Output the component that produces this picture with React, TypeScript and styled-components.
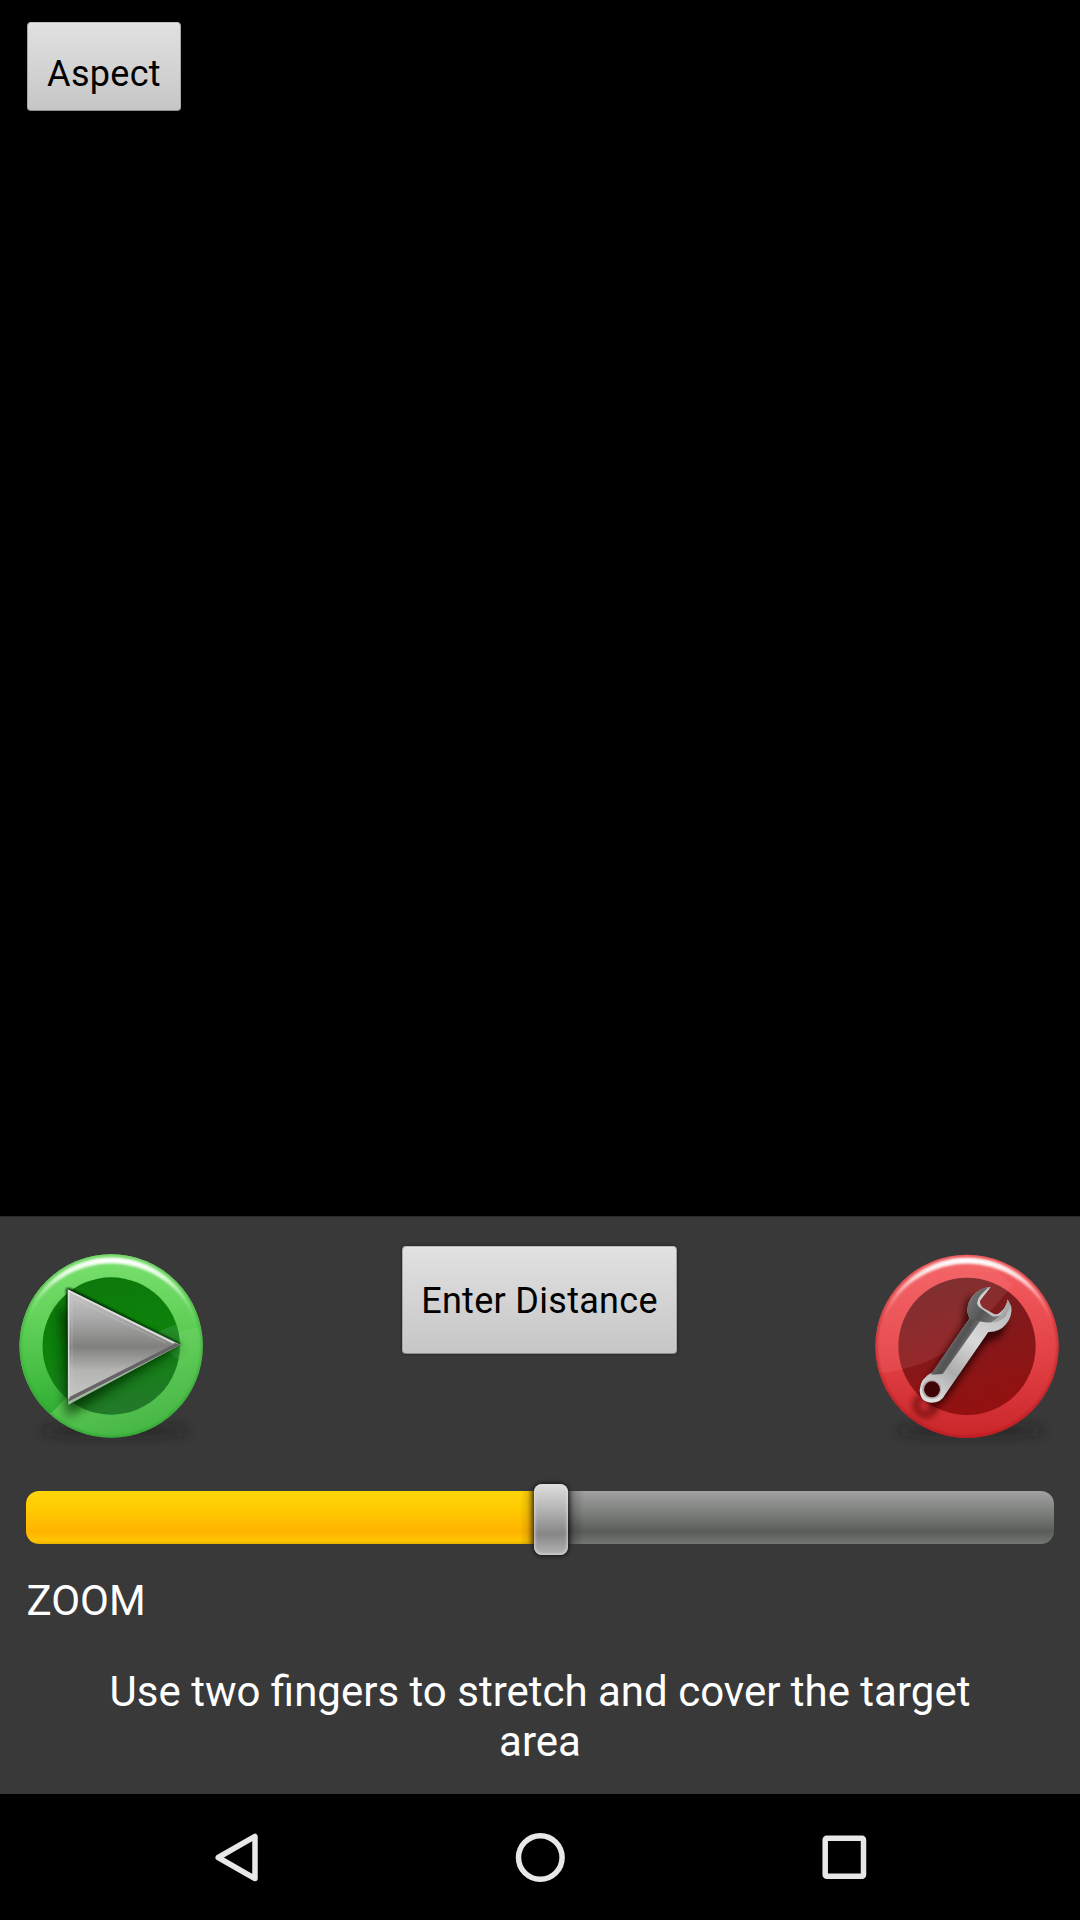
import React from "react";
import styled, { createGlobalStyle } from "styled-components";

const GlobalStyle = createGlobalStyle`
  * { box-sizing: border-box; }
  html, body { margin: 0; padding: 0; background: #000; }
  body { font-family: Roboto, "Noto Sans", sans-serif; }
`;

const Screen = styled.main`
  display: flex;
  flex-direction: column;
  width: 1080px;
  height: 1920px;
  background: #000;
  overflow: hidden;
`;

const Viewfinder = styled.section`
  height: 1216px;
  flex: none;
  padding: 22px 27px;
`;

const MetalButton = styled.button<{ $width: number; $height: number; $drop: number }>`
  display: block;
  width: ${(p) => p.$width}px;
  height: ${(p) => p.$height}px;
  padding: ${(p) => p.$drop}px 0 0;
  border: 1px solid;
  border-color: #bcbcbc #a5a5a5 #8c8c8c;
  border-radius: 4px;
  background: linear-gradient(#e1e1e1, #c6c6c6);
  box-shadow: inset 0 1px 1px #e6e6e6, 0 0 3px rgba(0, 0, 0, 0.55);
  font-family: inherit;
  font-size: 36px;
  line-height: 42px;
  letter-spacing: 0.3px;
  color: #000;
  white-space: nowrap;
`;

const Panel = styled.section`
  display: flex;
  flex-direction: column;
  height: 578px;
  flex: none;
  padding-top: 13px;
  border-top: 1px solid #2a2a2a;
  background: #393939;
`;

const Actions = styled.div`
  display: flex;
  justify-content: space-between;
  height: 229px;
`;

const CenterAction = styled.div`
  padding: 16px 1px 0 0;
`;

const DiscButton = styled.button`
  width: 230px;
  height: 230px;
  padding: 0;
  border: 0;
  background: none;
  svg { display: block; }
`;

const Slider = styled.div`
  display: flex;
  align-items: center;
  height: 71px;
  margin: 25px 26px 0;
`;

const Filled = styled.div`
  width: 520px;
  height: 53px;
  margin-top: -5px;
  border-radius: 13px 0 0 13px;
  background: linear-gradient(90deg, transparent 494px, rgba(60, 40, 0, 0.12) 501px, rgba(60, 40, 0, 0.5) 508px),
    linear-gradient(#ffd60a 0, #ffc800 38%, #ffb400 76%, #ffc400 94%, #e5b400 100%);
`;

const Unfilled = styled.div`
  flex: 1;
  height: 53px;
  margin-top: -5px;
  border-radius: 0 13px 13px 0;
  background: linear-gradient(90deg, rgba(0, 0, 0, 0.42) 22px, rgba(0, 0, 0, 0.15) 29px, transparent 38px),
    linear-gradient(#a0a0a0 0, #7e807e 40%, #5a5d59 76%, #6b706a 94%, #747874 100%);
`;

const Thumb = styled.div`
  position: relative;
  width: 34px;
  height: 71px;
  margin: 0 -22px 0 -12px;
  border-radius: 8px;
  background: linear-gradient(#dedede 0, #b2b2b2 38%, #868686 70%, #b4b4b4 100%);
  box-shadow: inset 0 0 3px 1px rgba(225, 225, 225, 0.8), 0 0 4px 1px rgba(0, 0, 0, 0.65);
`;

const Label = styled.div`
  margin: 21px 26.5px 0;
  font-size: 42px;
  line-height: 50px;
  color: #fff;
`;

const Hint = styled.p`
  width: 920px;
  margin: 41px auto 0;
  font-size: 42px;
  line-height: 50px;
  text-align: center;
  color: #fff;
`;

const NavBar = styled.nav`
  display: flex;
  justify-content: space-between;
  align-items: center;
  height: 126px;
  padding: 0 206px;
  svg { display: block; }
`;

function PlayDisc() {
  return (
    <svg width="230" height="230" viewBox="0 90 690 690">
      <defs>
        <linearGradient id="greenRim" x1="0.35" y1="0" x2="0.65" y2="1">
          <stop offset="0" stopColor="#7ade6e" />
          <stop offset="0.5" stopColor="#68d25f" />
          <stop offset="1" stopColor="#45b543" />
        </linearGradient>
        <linearGradient id="greenGloss" x1="0" y1="0" x2="0" y2="1">
          <stop offset="0" stopColor="#7be26f" />
          <stop offset="0.35" stopColor="#62d259" />
          <stop offset="1" stopColor="#1fa325" />
        </linearGradient>
        <linearGradient id="greenCore" x1="0.3" y1="0" x2="0.5" y2="1">
          <stop offset="0" stopColor="#0d780c" />
          <stop offset="0.5" stopColor="#0c830b" />
          <stop offset="1" stopColor="#23792a" />
        </linearGradient>
        <linearGradient id="greenShine" x1="0.45" y1="0" x2="0.4" y2="1">
          <stop offset="0" stopColor="#fff" />
          <stop offset="0.25" stopColor="#f0ffec" stopOpacity="0.8" />
          <stop offset="0.65" stopColor="#b0f0a8" stopOpacity="0.35" />
          <stop offset="1" stopColor="#80dc78" stopOpacity="0" />
        </linearGradient>
        <linearGradient id="greenEdge" x1="0" y1="0" x2="0" y2="1">
          <stop offset="0" stopColor="#5cbb51" stopOpacity="0.3" />
          <stop offset="0.3" stopColor="#42b43c" stopOpacity="0.75" />
          <stop offset="1" stopColor="#279d2c" stopOpacity="0.65" />
        </linearGradient>
        <linearGradient id="steel" x1="0" y1="270" x2="0" y2="605" gradientUnits="userSpaceOnUse">
          <stop offset="0" stopColor="#c9c9c9" />
          <stop offset="0.25" stopColor="#aaa" />
          <stop offset="0.51" stopColor="#80807e" />
          <stop offset="0.72" stopColor="#b4b4b2" />
          <stop offset="1" stopColor="#c8c8c8" />
        </linearGradient>
        <filter id="softPlay" x="-40%" y="-250%" width="180%" height="600%"><feGaussianBlur stdDeviation="18" /></filter>
        <filter id="edgePlay" x="-20%" y="-20%" width="140%" height="140%"><feGaussianBlur stdDeviation="3.500" /></filter>
        <clipPath id="greenClip"><circle cx="333.500" cy="438" r="275" /></clipPath>
        <clipPath id="greenInner"><circle cx="333.500" cy="438" r="206" /></clipPath>
      </defs>
      <ellipse cx="343" cy="692" rx="225" ry="16" fill="#151515" opacity="0.6" filter="url(#softPlay)" />
      <circle cx="333.500" cy="438" r="275" fill="url(#greenRim)" />
      <g clipPath="url(#greenClip)">
        <path d="M0 160H700V365Q380 395 155 638L0 680Z" fill="url(#greenGloss)" opacity="0.8" />
      </g>
      <circle cx="333.500" cy="438" r="206" fill="url(#greenCore)" />
      <g clipPath="url(#greenInner)">
        <path d="M540 371Q490 382 450 410L560 500Z" fill="#419a45" opacity="0.45" />
      </g>
      <g clipPath="url(#greenClip)">
        <path d="M180 320L540 440L200 650Z" fill="#002e06" opacity="0.8" filter="url(#softPlay)" />
        <path d="M198 265L210 264L544 432L206 606Z" fill="#002006" opacity="0.9" filter="url(#edgePlay)" />
        <circle cx="333.500" cy="438" r="273" fill="none" stroke="url(#greenEdge)" strokeWidth="8" filter="url(#edgePlay)" />
        <path d="M82 360A264 262 0 0 1 333 176A264 262 0 0 1 588 370A271 250 0 0 0 333 186A271 250 0 0 0 82 360Z" fill="url(#greenShine)" stroke="url(#greenShine)" strokeWidth="7" filter="url(#edgePlay)" />
      </g>
      <path d="M203 268L542 434L205 614Z" fill="#b5c5b5" opacity="0.9" />
      <path d="M206 589L518 428L541 434L207 604Z" fill="#666466" />
      <path d="M205 272L523 432L207 592Z" fill="url(#steel)" />
      <path d="M206 596V272L522 430" fill="none" stroke="#ececec" strokeWidth="5" opacity="0.75" />
      <path d="M216 580V294L498 429" fill="none" stroke="#d5d5d5" strokeWidth="5" opacity="0.2" />
    </svg>
  );
}

function WrenchDisc() {
  const body =
    "M422 171Q396 172 374 192Q351 214 352 244Q353 256 359 265L248 426Q211 444 209 480Q210 516 243 518Q274 518 285 494L415 306Q448 307 468 283Q488 257 484 230L473 208Q469 235 449 248Q440 256 431 251L399 233Q387 223 391 211Z";
  return (
    <svg width="230" height="230" viewBox="0 0 690 690">
      <defs>
        <linearGradient id="redRim" x1="0" y1="0" x2="0" y2="1">
          <stop offset="0" stopColor="#f46063" />
          <stop offset="0.5" stopColor="#e54448" />
          <stop offset="1" stopColor="#c9262a" />
        </linearGradient>
        <linearGradient id="redCore" x1="0.3" y1="0" x2="0.6" y2="1">
          <stop offset="0" stopColor="#6c2023" />
          <stop offset="0.5" stopColor="#85181a" />
          <stop offset="1" stopColor="#941010" />
        </linearGradient>
        <linearGradient id="redShine" x1="0.45" y1="0" x2="0.4" y2="1">
          <stop offset="0" stopColor="#fff" />
          <stop offset="0.25" stopColor="#fff0f0" stopOpacity="0.75" />
          <stop offset="0.65" stopColor="#ffb0b0" stopOpacity="0.35" />
          <stop offset="1" stopColor="#f77" stopOpacity="0" />
        </linearGradient>
        <linearGradient id="redEdge" x1="0" y1="0" x2="0" y2="1">
          <stop offset="0" stopColor="#c33" stopOpacity="0.3" />
          <stop offset="0.4" stopColor="#bd2a2e" stopOpacity="0.7" />
          <stop offset="1" stopColor="#aa1419" stopOpacity="0.65" />
        </linearGradient>
        <linearGradient id="wrenchLight" x1="430" y1="230" x2="250" y2="510" gradientUnits="userSpaceOnUse">
          <stop offset="0" stopColor="#bebebe" />
          <stop offset="0.35" stopColor="#d9d9d9" />
          <stop offset="0.7" stopColor="#acacac" />
          <stop offset="1" stopColor="#dedede" />
        </linearGradient>
        <linearGradient id="wrenchDark" x1="300" y1="330" x2="345" y2="358" gradientUnits="userSpaceOnUse">
          <stop offset="0" stopColor="#686868" />
          <stop offset="0.5" stopColor="#525252" />
          <stop offset="1" stopColor="#737373" />
        </linearGradient>
        <linearGradient id="jawDark" x1="352" y1="200" x2="470" y2="280" gradientUnits="userSpaceOnUse">
          <stop offset="0" stopColor="#777" />
          <stop offset="0.45" stopColor="#555" />
          <stop offset="1" stopColor="#8e8e8e" />
        </linearGradient>
        <filter id="softRed" x="-40%" y="-250%" width="180%" height="600%"><feGaussianBlur stdDeviation="18" /></filter>
        <filter id="wrenchShadow" x="-60%" y="-60%" width="220%" height="220%"><feGaussianBlur stdDeviation="10" /></filter>
        <filter id="edgeRed" x="-20%" y="-20%" width="140%" height="140%"><feGaussianBlur stdDeviation="3.500" /></filter>
        <filter id="faceBlend"><feGaussianBlur stdDeviation="2" /></filter>
        <clipPath id="redClip"><circle cx="351" cy="349" r="275" /></clipPath>
        <clipPath id="wrenchClip"><path d={body} /></clipPath>
      </defs>
      <ellipse cx="360" cy="602" rx="225" ry="16" fill="#151515" opacity="0.6" filter="url(#softRed)" />
      <circle cx="351" cy="349" r="275" fill="url(#redRim)" />
      <circle cx="351" cy="349" r="206" fill="url(#redCore)" />
      <g clipPath="url(#redClip)">
        <path d="M50 434Q270 420 390 280Q450 210 490 166L350 40H50Z" fill="#ff9b9b" opacity="0.13" />
        <circle cx="351" cy="349" r="273" fill="none" stroke="url(#redEdge)" strokeWidth="8" filter="url(#edgeRed)" />
        <path d="M100 270A264 262 0 0 1 351 87A264 262 0 0 1 606 281A271 250 0 0 0 351 97A271 250 0 0 0 100 270Z" fill="url(#redShine)" stroke="url(#redShine)" strokeWidth="7" filter="url(#edgeRed)" />
        <path d="M337 285L350 210L372 195V285L475 270L455 318L405 342L285 512L240 535L222 465Z" fill="#200" opacity="0.75" filter="url(#wrenchShadow)" />
        <circle cx="227" cy="525" r="29" fill="none" stroke="#500205" strokeWidth="20" opacity="0.6" filter="url(#wrenchShadow)" />
      </g>
      <path d={body} fill="url(#wrenchLight)" />
      <g clipPath="url(#wrenchClip)">
        <g filter="url(#faceBlend)">
          <path d="M355 260L391 272L278 432L247 434L236 422Z" fill="url(#wrenchDark)" />
          <path d="M422 165Q345 170 346 242L359 267L389 274Q440 286 466 258L484 218L466 230Q460 264 427 259L386 230Q376 213 394 193Z" fill="url(#jawDark)" />
          <path d="M421 174Q384 194 381 222L392 232L390 212Z" fill="#cfcfcf" />
          <path d="M472 210L483 228Q478 243 464 257Q448 276 424 276Q451 260 460 242Z" fill="#a8a8a8" />
        </g>
      </g>
      <circle cx="245" cy="478" r="29" fill="#b2aaaa" />
      <circle cx="246" cy="478" r="24" fill="#400306" />
    </svg>
  );
}

export default function App() {
  return (
    <Screen>
      <GlobalStyle />
      <Viewfinder>
        <MetalButton $width={154} $height={89} $drop={14}>Aspect</MetalButton>
      </Viewfinder>
      <Panel>
        <Actions>
          <DiscButton aria-label="Start"><PlayDisc /></DiscButton>
          <CenterAction>
            <MetalButton $width={275} $height={108} $drop={2}>Enter Distance</MetalButton>
          </CenterAction>
          <DiscButton aria-label="Settings"><WrenchDisc /></DiscButton>
        </Actions>
        <Slider>
          <Filled />
          <Thumb />
          <Unfilled />
        </Slider>
        <Label>ZOOM</Label>
        <Hint>Use two fingers to stretch and cover the target area</Hint>
      </Panel>
      <NavBar>
        <svg width="60" height="60" viewBox="0 0 60 60" fill="none" stroke="#e8e8e8" strokeWidth="5.500" strokeLinejoin="round">
          <path d="M49 9.500V51.500L12.200 30.500Z" />
        </svg>
        <svg width="60" height="60" viewBox="0 0 60 60" fill="none" stroke="#e8e8e8" strokeWidth="5.500">
          <circle cx="30.300" cy="30.500" r="21.800" />
        </svg>
        <svg width="60" height="60" viewBox="0 0 60 60" fill="none" stroke="#e8e8e8" strokeWidth="5.500">
          <rect x="11.200" y="11.200" width="38.300" height="38" rx="1.500" />
        </svg>
      </NavBar>
    </Screen>
  );
}
